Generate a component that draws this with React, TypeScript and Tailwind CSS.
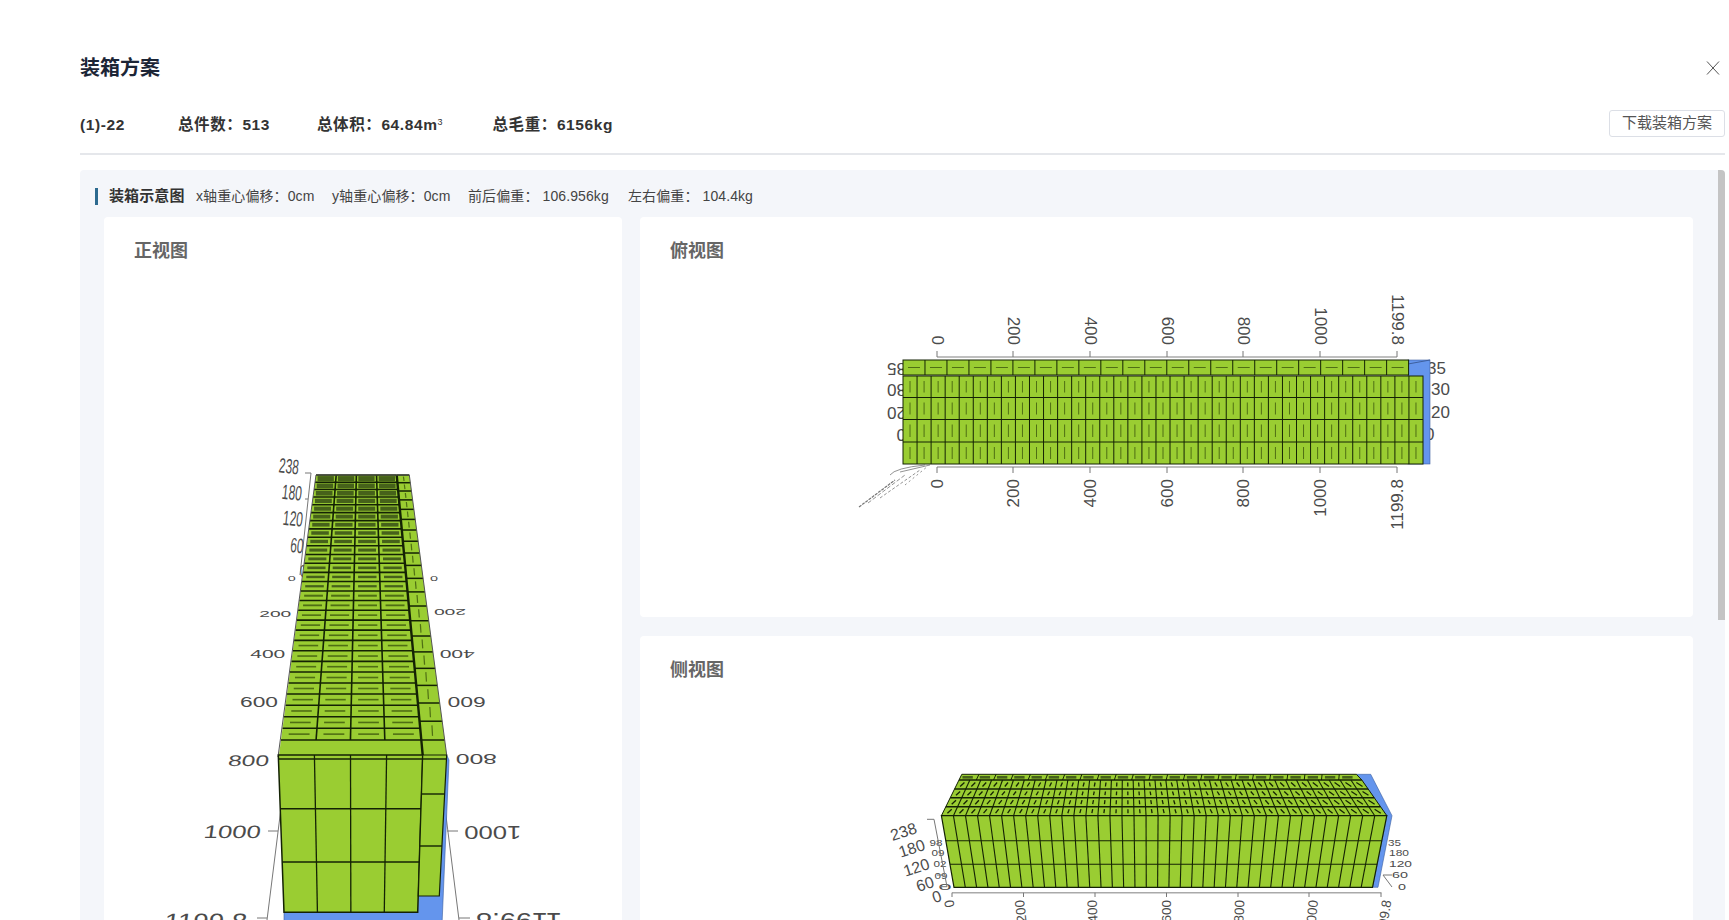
import React from 'react';

const GREEN = '#9acd32';
const BLUE = '#6495ed';
const LINE = '#142204';
const DASH = '#4f6f14';
const AXIS = '#777';

const lerp = (a: number, b: number, t: number) => a + (b - a) * t;
const range = (n: number) => Array.from({ length: n }, (_, i) => i);

interface LabelProps {
  x: number;
  y: number;
  w: number;
  h: number;
  text: string;
  rot?: number;
  skew?: number;
}

// axis label squeezed into the box it has in the picture
const Label: React.FC<LabelProps> = ({ x, y, w, h, text, rot = 0, skew = 0 }) => {
  const sx = w / (text.replace('.', '').length * 5.56 + (text.includes('.') ? 2.8 : 0));
  const sy = h / 7.2;
  return (
    <text
      transform={`translate(${x} ${y}) rotate(${rot}) skewX(${skew}) scale(${sx} ${sy})`}
      fontSize={10}
      textAnchor="middle"
      dominantBaseline="central"
      fill="#4b4b4b"
      fontFamily="'Liberation Sans', sans-serif"
    >
      {text}
    </text>
  );
};

const Seg: React.FC<{ a: number[]; b: number[]; c?: string; w?: number }> = ({ a, b, c = LINE, w = 1 }) => (
  <line x1={a[0]} y1={a[1]} x2={b[0]} y2={b[1]} stroke={c} strokeWidth={w} />
);

const FrontView: React.FC = () => {
  const leftAt = (y: number) => lerp(316, 279, (y - 475) / 280);
  const midAt = (y: number) => lerp(396.7, 422.7, (y - 475) / 280);
  const rightAt = (y: number) => lerp(409.3, 446.7, (y - 475) / 280);
  const mainRows = range(29).map((i) => {
    const t = i / 28;
    return 475 + 265 * t * (0.75 + 0.25 * t);
  });
  const sideRows = range(21).map((i) => {
    const t = i / 20;
    return 475 + 265 * t * (0.56 + 0.44 * t);
  });
  const frontRows = [759, 808.7, 862];
  const leftLabels: [number, number, number, number, string, number][] = [
    [291.7, 578.3, 8, 5, '0', 0],
    [275.3, 613.3, 32, 7, '200', 0],
    [267.7, 654, 35, 8, '400', 0],
    [259, 702, 38, 10, '600', 0],
    [248.7, 760.3, 41, 11, '800', -8],
    [232.3, 831.7, 57, 13, '1000', -8],
    [205.7, 921, 85, 16, '1199.8', -8],
  ];
  const rightLabels: [number, number, number, number, string][] = [
    [434, 578.3, 8, 5, '0'],
    [450, 613, 32, 7, '200'],
    [457.3, 653.7, 35, 8, '400'],
    [466.7, 702, 38, 10, '600'],
    [476.3, 760, 41, 11, '800'],
    [492.7, 831.7, 57, 13, '1000'],
    [519, 921, 88, 16, '1199.8'],
  ];
  return (
    <svg viewBox="104 262 518 700" className="block w-[518px] h-[700px]">
      <Seg a={[305, 473]} b={[311, 473]} c={AXIS} />
      <Seg a={[311, 473]} b={[300, 575]} c={AXIS} />
      <Seg a={[305, 499]} b={[308, 499]} c={AXIS} />
      <Label x={289} y={466.7} w={20} h={15} text="238" rot={6} />
      <Label x={292} y={493} w={20} h={15} text="180" rot={6} />
      <Label x={293} y={519} w={20} h={15} text="120" rot={6} />
      <Label x={297} y={546} w={13} h={15} text="60" rot={6} />
      <Label x={303} y={571} w={6} h={12} text="0" />
      {leftLabels.map(([x, y, w, h, t, s]) => (
        <Label key={t} x={x} y={y} w={w} h={h} text={t} skew={s} />
      ))}
      {rightLabels.map(([x, y, w, h, t]) => (
        <Label key={t} x={x} y={y} w={w} h={h} text={t} rot={180} />
      ))}
      <Seg a={[281, 808]} b={[267, 920]} c={AXIS} />
      <Seg a={[445, 808]} b={[459, 920]} c={AXIS} />
      <Seg a={[268, 831]} b={[278, 831]} c={AXIS} />
      <Seg a={[447, 831]} b={[458, 831]} c={AXIS} />
      <Seg a={[257, 918]} b={[267, 918]} c={AXIS} />
      <Seg a={[459, 918]} b={[470, 918]} c={AXIS} />

      {/* blue floor of the container */}
      <polygon points="446.7,755 449,760 442,925 284,925 284,905 420,890" fill={BLUE} stroke="#3d5f9e" strokeWidth={0.6} />

      {/* top of the load */}
      <polygon points={`316,475 409.3,475 446.7,755 279,755`} fill={GREEN} />
      {mainRows.slice(0, -1).map((y, r) => {
        const y2 = mainRows[r + 1];
        const cy = (y + y2) / 2;
        const near = r / 27;
        return range(4).map((c) => {
          const l = lerp(leftAt(cy), midAt(cy), c / 4);
          const w = (midAt(cy) - leftAt(cy)) / 4;
          const inset = w * lerp(0.1, 0.2, near);
          return (
            <Seg
              key={`m${r}-${c}`}
              a={[l + inset, cy]}
              b={[l + w - inset, cy]}
              c={near < 0.5 ? '#46621a' : DASH}
              w={Math.max(1.6, lerp(5, 1.4, Math.min(near * 1.6, 1)))}
            />
          );
        });
      })}
      {mainRows.map((y) => (
        <Seg key={`mr${y}`} a={[leftAt(y), y]} b={[midAt(y), y]} w={1.6} />
      ))}
      {range(3).map((c) => (
        <Seg
          key={`mc${c}`}
          a={[lerp(316, 396.7, (c + 1) / 4), 475]}
          b={[lerp(281.7, 419.2, (c + 1) / 4), 740]}
          w={1.6}
        />
      ))}
      {sideRows.slice(0, -1).map((y, r) => {
        const y2 = sideRows[r + 1];
        const cx = (midAt((y + y2) / 2) + rightAt((y + y2) / 2)) / 2;
        return <Seg key={`sd${r}`} a={[cx, y + (y2 - y) * 0.22]} b={[cx + 0.6, y2 - (y2 - y) * 0.22]} c={DASH} w={1.2} />;
      })}
      {sideRows.map((y) => (
        <Seg key={`sr${y}`} a={[midAt(y), y]} b={[rightAt(y), y]} w={1.5} />
      ))}
      <Seg a={[396.7, 475]} b={[422.7, 755]} w={2.4} />
      <Seg a={[316, 475]} b={[409.3, 475]} c="#555" w={1} />
      <Seg a={[316, 475]} b={[278, 757]} c="#555" w={1} />
      <Seg a={[409.3, 475]} b={[446.7, 755]} c="#555" w={1} />

      {/* front face */}
      <polygon points="278.3,755 422.7,755 417.7,912.3 284,912.3" fill={GREEN} stroke={LINE} strokeWidth={1.5} />
      <polygon points="422.7,755 446.7,755 439.3,896 418.3,896" fill={GREEN} stroke={LINE} strokeWidth={1.2} />
      {frontRows.map((y) => {
        const t = (y - 755) / 157.3;
        return <Seg key={y} a={[lerp(278.3, 284, t), y]} b={[lerp(422.7, 417.7, t), y]} w={1.5} />;
      })}
      {range(3).map((c) => (
        <Seg
          key={`fc${c}`}
          a={[lerp(278.3, 422.7, (c + 1) / 4), 755]}
          b={[lerp(284, 417.7, (c + 1) / 4), 912.3]}
          w={1.3}
        />
      ))}
      {[759, 794, 846].map((y) => {
        const t = (y - 755) / 141;
        return <Seg key={y} a={[lerp(422.7, 418.3, t), y]} b={[lerp(446.7, 439.3, t), y]} w={1.4} />;
      })}
    </svg>
  );
};

const TopView: React.FC = () => {
  const upper = [937, 1013, 1090, 1167, 1243, 1320, 1397];
  const names = ['0', '200', '400', '600', '800', '1000', '1199.8'];
  const rows = [376, 397.5, 419.5, 442, 464];
  const cw = (1423 - 903) / 37;
  const sw = (1408.6 - 903) / 23;
  return (
    <svg viewBox="640 262 1053 355" className="block w-[1053px] h-[355px]">
      {/* side labels peek out from behind the load */}
      {[['85', 368], ['80', 389], ['20', 412], ['0', 434]].map(([t, y]) => (
        <text key={t} transform={`translate(906 ${y}) rotate(180)`} fontSize={17} textAnchor="start" dominantBaseline="central" fill="#4b4b4b" fontFamily="'Liberation Sans', sans-serif">{t}</text>
      ))}
      {[['35', 368, 1427], ['30', 389, 1431], ['20', 412, 1431], ['0', 434, 1425]].map(([t, y, x]) => (
        <text key={t} x={Number(x)} y={Number(y)} fontSize={17} dominantBaseline="central" fill="#4b4b4b" fontFamily="'Liberation Sans', sans-serif">{t}</text>
      ))}

      {/* axes */}
      <Seg a={[937, 357]} b={[1397, 357]} c="#aaa" w={1.6} />
      <Seg a={[937, 467]} b={[1397, 467]} c="#aaa" w={1.6} />
      {upper.map((x, i) => (
        <g key={x}>
          <Seg a={[x, 351]} b={[x, 357]} c={AXIS} />
          <Seg a={[x, 467]} b={[x, 473]} c={AXIS} />
          <text
            transform={`translate(${x} 345) rotate(90)`}
            fontSize={17}
            textAnchor="end"
            dominantBaseline="central"
            fill="#4b4b4b"
            fontFamily="'Liberation Sans', sans-serif"
          >
            {names[i]}
          </text>
          <text
            transform={`translate(${x} 479) rotate(-90)`}
            fontSize={17}
            textAnchor="end"
            dominantBaseline="central"
            fill="#4b4b4b"
            fontFamily="'Liberation Sans', sans-serif"
          >
            {names[i]}
          </text>
        </g>
      ))}

      {/* tiny far-away labels */}
      <g stroke="#777" strokeWidth={0.8} fill="none">
        <path d="M890 475 Q895 468 925 465" />
        <path d="M900 472 L930 465" />
        <path d="M859 507 L895 480" strokeDasharray="3 1" strokeWidth={1.2} />
        <path d="M868 503 L905 475" strokeDasharray="4 2" />
        <path d="M880 498 L920 470" strokeDasharray="3 2" />
        <path d="M905 485 L928 466" strokeDasharray="2 3" />
      </g>

      {/* container floor */}
      <rect x={1408} y={360} width={22} height={104} fill={BLUE} stroke="#3d5f9e" strokeWidth={0.6} />
      <Seg a={[1408, 364]} b={[1430, 360]} c="#3d5f9e" />

      {/* load */}
      <rect x={903} y={360} width={505.6} height={15} fill={GREEN} stroke={LINE} />
      {range(23).map((c) => (
        <g key={c}>
          {c > 0 && <Seg a={[903 + c * sw, 360]} b={[903 + c * sw, 375]} />}
          <Seg a={[903 + c * sw + 5, 367.5]} b={[903 + (c + 1) * sw - 5, 367.5]} c={DASH} />
        </g>
      ))}
      <rect x={903} y={376} width={520} height={88} fill={GREEN} stroke={LINE} />
      {rows.slice(1, -1).map((y) => (
        <Seg key={y} a={[903, y]} b={[1423, y]} />
      ))}
      {range(37).map((c) => (
        <g key={c}>
          {c > 0 && <Seg a={[903 + c * cw, 376]} b={[903 + c * cw, 464]} />}
          {rows.slice(0, -1).map((y, r) => (
            <Seg
              key={y}
              a={[903 + (c + 0.5) * cw, y + 5]}
              b={[903 + (c + 0.5) * cw, rows[r + 1] - 5]}
              c={DASH}
            />
          ))}
        </g>
      ))}
    </svg>
  );
};

const SideView: React.FC = () => {
  const topY = 774.3;
  const faceY = 815.7;
  const floorY = 887.3;
  const leftAt = (y: number) => lerp(961.8, 941.4, (y - topY) / (faceY - topY));
  const rightAt = (y: number) => lerp(1361.8, 1386.8, (y - 780) / (faceY - 780));
  const rowY = [780, 789, 797.7, 806.7, 815.7];
  const ticks = [952, 1023.5, 1095, 1166.5, 1238, 1309, 1381];
  const labelX = [949, 1019.6, 1092, 1166.4, 1240, 1313.6, 1387];
  const names = ['0', '200', '400', '600', '800', '1000', '1199.8'];
  const flatRight: [number, number, number, number, string][] = [
    [1394.5, 842.3, 13, 7, '35'],
    [1399, 852.7, 20, 7, '180'],
    [1400.5, 863.3, 23, 7, '120'],
    [1400, 875.3, 16, 7, '60'],
    [1402, 887.3, 8, 7, '0'],
  ];
  const flatLeft: [number, number, string][] = [
    [936, 842, '98'],
    [938, 852.7, '09'],
    [940, 863.3, '02'],
    [941, 875, '09'],
    [945, 887, '0'],
  ];
  return (
    <svg viewBox="640 681 1053 300" className="block w-[1053px] h-[300px]">
      {flatLeft.map(([x, y, t]) => (
        <Label key={y} x={x} y={y} w={13} h={7} text={t} />
      ))}
      <Seg a={[927, 819.3]} b={[934, 819.3]} c={AXIS} />
      <Seg a={[934, 819.3]} b={[947, 886.7]} c={AXIS} />
      <Seg a={[940, 886.7]} b={[947, 886.7]} c={AXIS} />
      <Seg a={[937, 875]} b={[944, 875]} c={AXIS} />
      {[
        [903.6, 831.7, '238'],
        [911.8, 848.3, '180'],
        [916.4, 867.3, '120'],
        [925, 884, '60'],
        [936.8, 896.7, '0'],
      ].map(([x, y, t]) => (
        <text
          key={String(t)}
          transform={`translate(${x} ${y}) rotate(-18)`}
          fontSize={16}
          textAnchor="middle"
          dominantBaseline="central"
          fill="#4b4b4b"
          fontFamily="'Liberation Sans', sans-serif"
        >
          {t}
        </text>
      ))}
      {flatRight.map(([x, y, w, h, t]) => (
        <Label key={y} x={x} y={y} w={w} h={h} text={t} />
      ))}
      <Seg a={[1383, 875]} b={[1392, 875]} c={AXIS} />
      <Seg a={[1383, 875]} b={[1392, 887]} c={AXIS} />

      {/* floor */}
      <polygon points={`1356.4,${topY} 1370.7,${topY} 1392,${faceY} 1378,${floorY} 1372.5,${floorY} 1386.8,${faceY} 1361.8,780 1355,780`} fill={BLUE} stroke="#3d5f9e" strokeWidth={0.6} />

      {/* top */}
      <polygon points={`${leftAt(topY)},${topY} 1356.4,${topY} 1361.8,780 1386.8,${faceY} ${leftAt(faceY)},${faceY}`} fill={GREEN} stroke={LINE} strokeWidth={1} />
      {range(23).map((c) => {
        const l = leftAt(780);
        const w = (1356 - l) / 23;
        return (
          <g key={c}>
            <rect x={l + (c + 0.2) * w} y={776} width={w * 0.6} height={2.6} fill="#46621a" />
            {c > 0 && <Seg a={[leftAt(topY) + c * ((1356.4 - leftAt(topY)) / 23), topY]} b={[l + c * w, 780]} />}
          </g>
        );
      })}
      {rowY.map((y) => (
        <Seg key={y} a={[leftAt(y), y]} b={[rightAt(y), y]} w={1.4} />
      ))}
      {rowY.slice(0, -1).map((y, r) => {
        const y2 = rowY[r + 1];
        return range(37).map((c) => {
          const top = lerp(leftAt(y), rightAt(y), c / 37);
          const bottom = lerp(leftAt(y2), rightAt(y2), c / 37);
          const nextT = lerp(leftAt(y), rightAt(y), (c + 1) / 37);
          const nextB = lerp(leftAt(y2), rightAt(y2), (c + 1) / 37);
          return (
            <g key={`${r}-${c}`}>
              {c > 0 && <Seg a={[top, y]} b={[bottom, y2]} w={1.1} />}
              <Seg a={[(top + nextT) / 2, y + 2.5]} b={[(bottom + nextB) / 2, y2 - 2.5]} c={LINE} w={1.3} />
            </g>
          );
        });
      })}

      {/* front */}
      <polygon points={`941.4,${faceY} 1386.8,${faceY} 1372.5,${floorY} 954,${floorY}`} fill={GREEN} stroke={LINE} strokeWidth={1.2} />
      {range(36).map((c) => (
        <Seg
          key={c}
          a={[lerp(941.4, 1386.8, (c + 1) / 37), faceY]}
          b={[lerp(954, 1372.5, (c + 1) / 37), floorY]}
          w={1.1}
        />
      ))}
      {[840.7, 864.3].map((y) => {
        const t = (y - faceY) / (floorY - faceY);
        return <Seg key={y} a={[lerp(941.4, 954, t), y]} b={[lerp(1386.8, 1372.5, t), y]} w={1.1} />;
      })}

      {/* bottom axis */}
      <Seg a={[952, 892.7]} b={[1381.4, 892.7]} c="#aaa" w={1.6} />
      {ticks.map((x, i) => (
        <g key={x}>
          <Seg a={[x, 892.7]} b={[x, 897]} c={AXIS} />
          <text
            transform={`translate(${labelX[i]} 900) rotate(${-90 + (i - 3) * 3})`}
            fontSize={13.5}
            textAnchor="end"
            dominantBaseline="central"
            fill="#4b4b4b"
            fontFamily="'Liberation Sans', sans-serif"
          >
            {names[i]}
          </text>
        </g>
      ))}
    </svg>
  );
};

const App: React.FC = () => {
  return (
    <div className="w-[1729px] h-[920px] overflow-hidden bg-white flex flex-col pl-[80px] pr-[4px] [font-family:'Liberation_Sans','Noto_Sans_CJK_SC',sans-serif]">
      <div className="flex items-center justify-between pt-[54px] pr-[5px]">
        <h1 className="text-[20px] leading-[28px] font-bold text-[#1c2536]">装箱方案</h1>
        <svg width="14" height="14" viewBox="0 0 14 14">
          <path d="M1 0.5 13 13.5M13 0.5 1 13.5" stroke="#555" strokeWidth="1" fill="none" />
        </svg>
      </div>
      <div className="flex items-center justify-between h-[27px] mt-[28px]">
        <div className="flex items-center text-[15.5px] font-semibold text-[#333] tracking-[0.6px] pt-[2px]">
          <span className="w-[98px]">(1)-22</span>
          <span className="w-[139px]">总件数：513</span>
          <span className="w-[175.5px]">
            总体积：64.84m<sup className="text-[9px] font-normal">3</sup>
          </span>
          <span>总毛重：6156kg</span>
        </div>
        <button className="w-[116px] h-[27px] rounded-[3px] border border-[#dcdfe6] text-[15px] text-[#555] bg-white">
          下载装箱方案
        </button>
      </div>
      <div className="h-[2px] bg-[#e5e7eb] mt-[16px]" />
      <div className="relative flex-1 mt-[15px] overflow-hidden rounded-t-[4px] bg-[#f4f6fa]">
        <div className="absolute right-0 top-0 w-[7px] h-[450px] bg-[#c4c4c4]" />
        <div className="flex items-center h-[17px] mt-[18px] ml-[15px] text-[14px] text-[#444] tracking-[0.1px]">
          <span className="w-[3px] h-[17px] bg-[#2c6a8f]" />
          <span className="ml-[11px] text-[15px] font-bold text-[#333] w-[87px]">装箱示意图</span>
          <span className="w-[136px]">x轴重心偏移：0cm</span>
          <span className="w-[136px]">y轴重心偏移：0cm</span>
          <span className="w-[160px]">前后偏重： 106.956kg</span>
          <span>左右偏重： 104.4kg</span>
        </div>
        <div className="grid grid-cols-[518px_1053px] gap-x-[18px] ml-[24px] mt-[12px]">
          <section className="bg-white rounded-[4px] h-[800px]">
            <h2 className="pt-[23px] pl-[30px] text-[18px] leading-[22px] font-bold text-[#666]">正视图</h2>
            <FrontView />
          </section>
          <div className="flex flex-col gap-[19px]">
            <section className="bg-white rounded-[4px] h-[400px]">
              <h2 className="pt-[23px] pl-[30px] text-[18px] leading-[22px] font-bold text-[#666]">俯视图</h2>
              <TopView />
            </section>
            <section className="bg-white rounded-[4px] h-[400px]">
              <h2 className="pt-[23px] pl-[30px] text-[18px] leading-[22px] font-bold text-[#666]">侧视图</h2>
              <SideView />
            </section>
          </div>
        </div>
      </div>
    </div>
  );
};

export default App;
